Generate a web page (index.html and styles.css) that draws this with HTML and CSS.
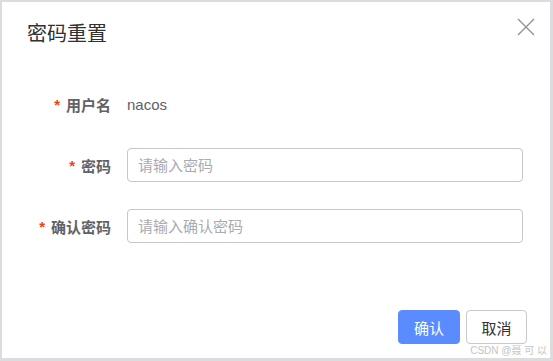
FILE: index.html
```html
<!DOCTYPE html>
<html lang="zh-CN">

<head>
    <meta charset="UTF-8" />
    <meta name="viewport" content="width=device-width, initial-scale=1.0" />
    <title>密码重置</title>
    <link rel="stylesheet" href="styles.css">
</head>

<body>

    <div class="dialog">
        <div class="dialog-header">
            <span class="dialog-title">密码重置</span>
            <button class="close-btn" aria-label="关闭">
                <svg width="18" height="18" viewBox="0 0 18 18">
                    <path d="M1 1 L17 17 M17 1 L1 17" stroke="#909399" stroke-width="1.4" fill="none" />
                </svg>
            </button>
        </div>

        <div class="form">
            <label class="form-label"><span class="star">*</span>用户名</label>
            <div class="form-value">nacos</div>

            <label class="form-label" for="pwd"><span class="star">*</span>密码</label>
            <input type="password" id="pwd" placeholder="请输入密码">

            <label class="form-label" for="pwd2"><span class="star">*</span>确认密码</label>
            <input type="password" id="pwd2" placeholder="请输入确认密码">
        </div>

        <div class="dialog-footer">
            <button class="btn btn-primary">确认</button>
            <button class="btn">取消</button>
        </div>

        <span class="watermark">CSDN @聂 可 以</span>
    </div>

</body>

</html>
```

FILE: styles.css
```css
body {
    margin: 0;
    padding: 2px 3px 3px 2px;
    background-color: #dcdcdf;
    font-family: "Liberation Sans", "Noto Sans CJK SC", sans-serif;
}

.dialog {
    position: relative;
    height: 356px;
    background: #fff;
    display: flex;
    flex-direction: column;
}

.dialog-header {
    display: flex;
    justify-content: space-between;
    align-items: flex-start;
    padding: 22px 15px 0 25px;
}

.dialog-title {
    font-size: 20px;
    line-height: 20px;
    color: #303133;
}

.close-btn {
    border: none;
    background: none;
    padding: 0;
    margin-top: -6px;
    width: 18px;
    height: 18px;
    cursor: pointer;
}

.form {
    display: grid;
    grid-template-columns: 109px 1fr;
    column-gap: 16px;
    row-gap: 27px;
    margin-top: 43px;
    padding-right: 27px;
}

.form-label {
    display: flex;
    justify-content: flex-end;
    align-items: center;
    height: 34px;
    font-size: 15px;
    font-weight: bold;
    color: #606266;
}

.star {
    color: #f5410f;
    margin-right: 6px;
    font-size: 15px;
}

.form-value {
    display: flex;
    align-items: center;
    height: 34px;
    font-size: 15px;
    color: #606266;
}

input {
    box-sizing: border-box;
    height: 34px;
    width: 100%;
    padding: 0 10px;
    border: 1px solid #c6c6cf;
    border-radius: 4px;
    font-size: 15px;
    font-family: inherit;
    outline: none;
}

input::placeholder {
    color: #a8abb2;
}

.dialog-footer {
    margin-top: auto;
    display: flex;
    justify-content: flex-end;
    gap: 6px;
    padding: 0 23px 14px 0;
}

.btn {
    box-sizing: border-box;
    height: 34px;
    width: 61px;
    border: 1px solid #c8c8d0;
    border-radius: 4px;
    background: #fff;
    color: #303133;
    font-size: 15px;
    font-family: inherit;
    cursor: pointer;
}

.btn-primary {
    width: 62px;
    background: #5a8cff;
    border-color: #5a8cff;
    color: #fff;
}

.watermark {
    position: absolute;
    right: 3px;
    bottom: 1px;
    font-size: 10px;
    color: #c4c4c4;
}
```
